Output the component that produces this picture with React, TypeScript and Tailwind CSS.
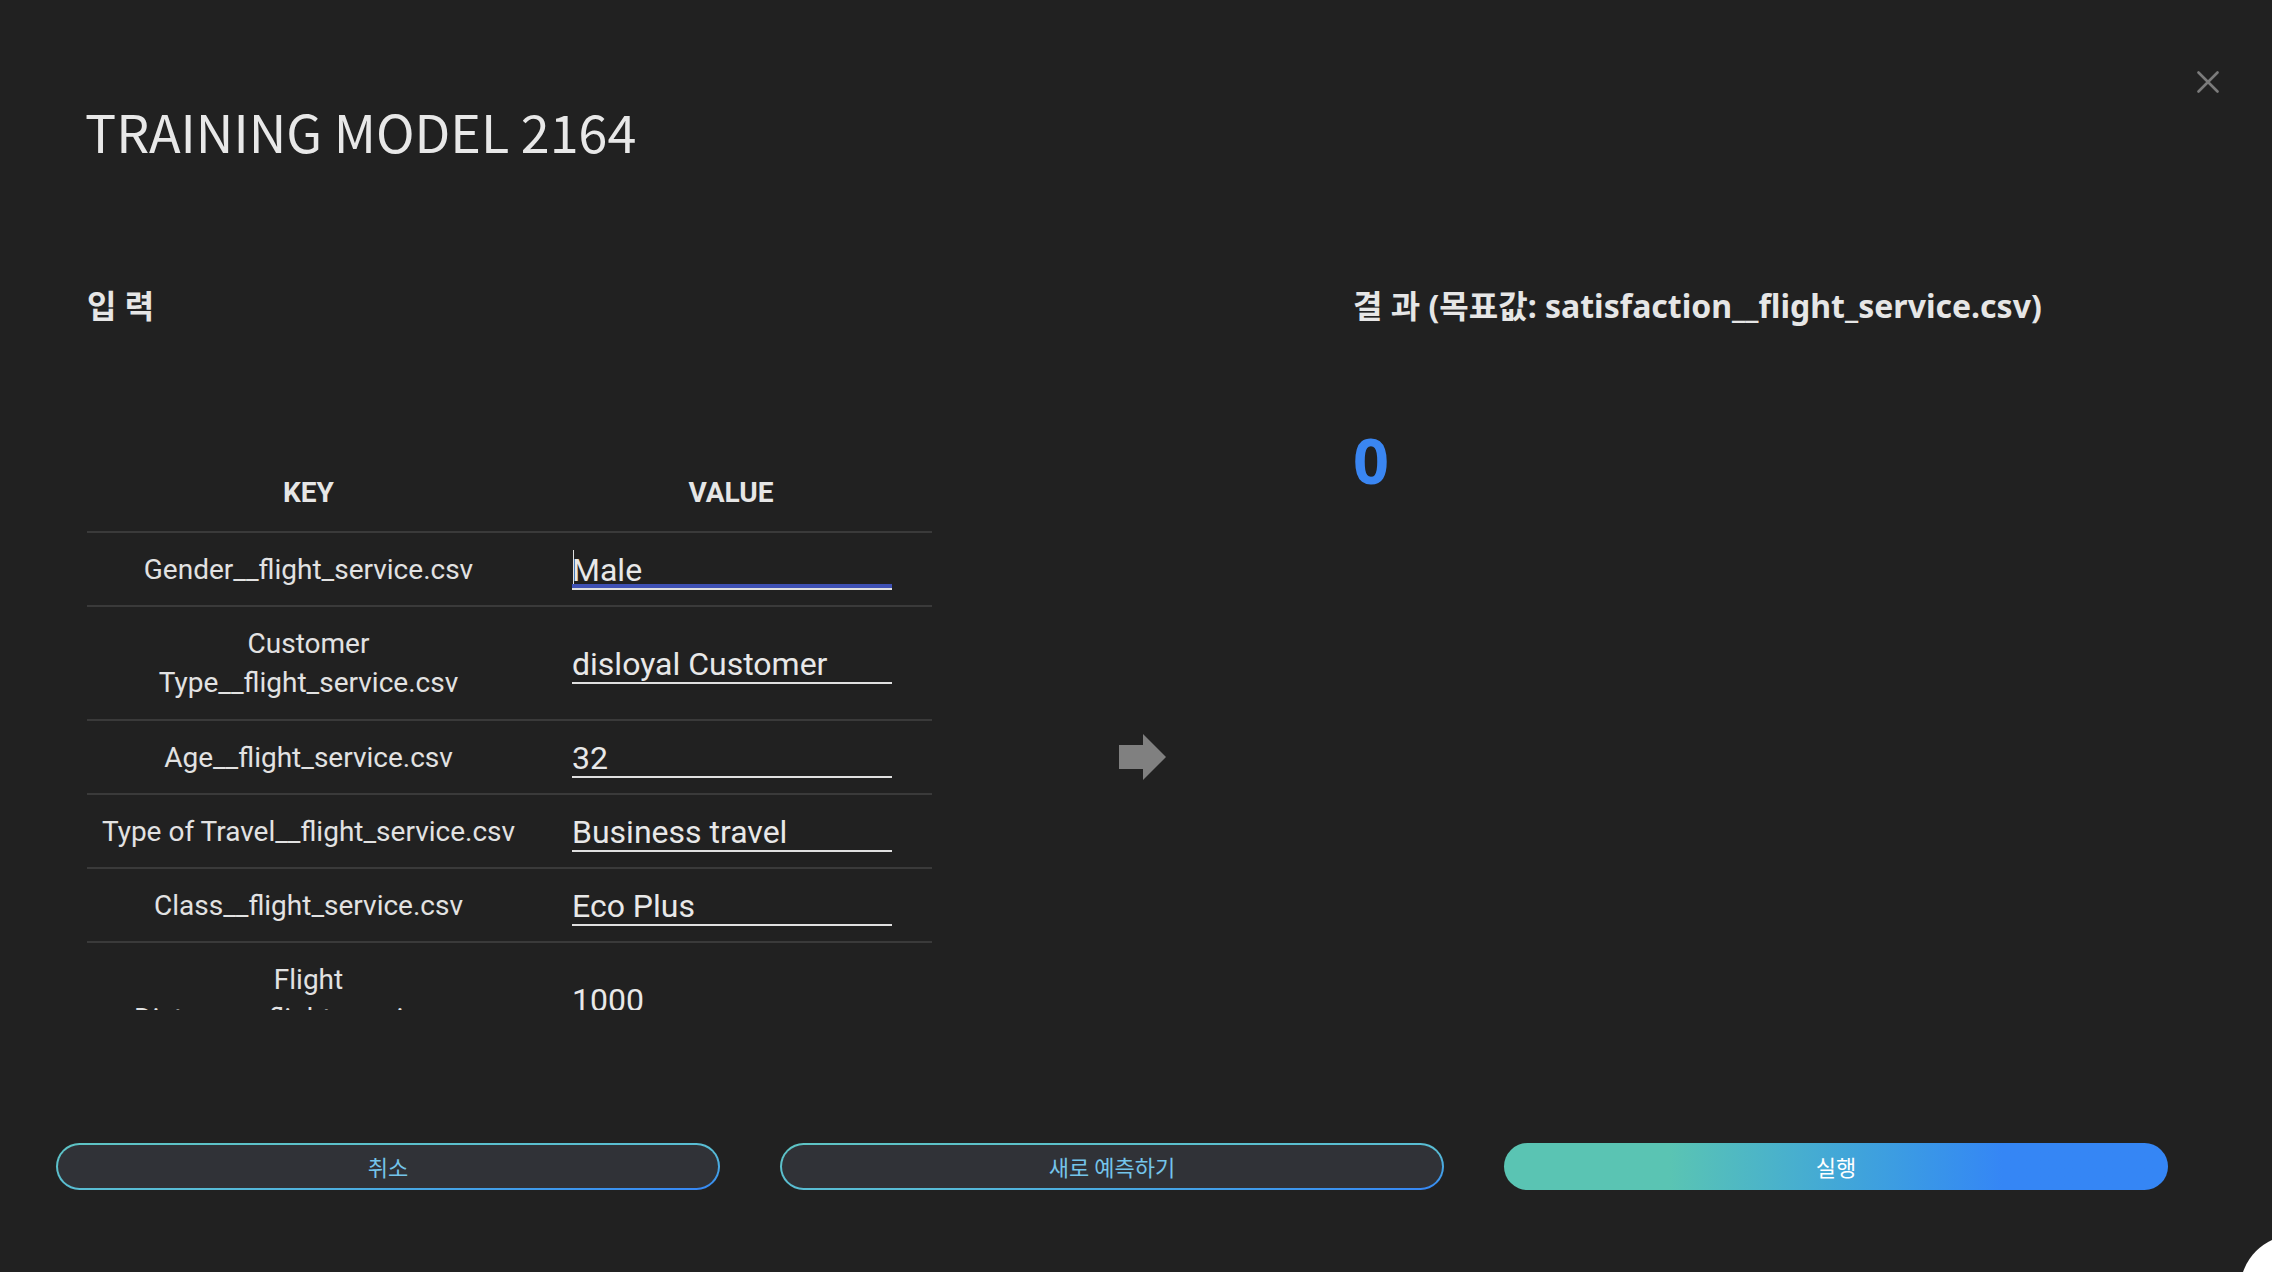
import React from "react";

type Row = { key: string[]; value: string; focused?: boolean };

const rows: Row[] = [
  { key: ["Gender__flight_service.csv"], value: "Male", focused: true },
  { key: ["Customer", "Type__flight_service.csv"], value: "disloyal Customer" },
  { key: ["Age__flight_service.csv"], value: "32" },
  { key: ["Type of Travel__flight_service.csv"], value: "Business travel" },
  { key: ["Class__flight_service.csv"], value: "Eco Plus" },
  { key: ["Flight", "Distance__flight_service.csv"], value: "1000" },
];

const cjk = "font-['Noto_Sans_CJK_KR',sans-serif]";
const noto = "font-['Noto_Sans','Noto_Sans_CJK_KR',sans-serif]";
const roboto = "font-['Roboto','Noto_Sans_CJK_KR',sans-serif]";

function ValueInput({ value, focused }: { value: string; focused?: boolean }) {
  return (
    <div className="relative w-full border-b-2 border-[#e0e0e0] pb-[2px]">
      <div className={`${roboto} h-[37px] text-[32px] leading-[43px] text-[#e8e8e8]`}>{value}</div>
      {focused && (
        <>
          {/* caret */}
          <span className="absolute left-[1px] top-[1px] h-[34px] w-[1px] bg-[#e0e0e0]" />
          {/* focus underline */}
          <span className="absolute bottom-0 left-0 right-0 h-[4px] bg-[#3f51b5]" />
        </>
      )}
    </div>
  );
}

function OutlineButton({ label }: { label: string }) {
  return (
    <div className="h-[47px] w-[664px] rounded-full bg-linear-to-br from-[#5ec4c4] via-[#58bcd6] via-60% to-[#3584f5] p-[2px]">
      <div className={`${cjk} flex h-full w-full items-center justify-center rounded-full bg-[#303237] text-[22px] text-[#74c4ea]`}>
        {label}
      </div>
    </div>
  );
}

export default function App() {
  return (
    <div className="relative h-[1272px] w-[2272px] overflow-hidden bg-[#212121] text-[#e6e6e6]">
      {/* close */}
      <button className="absolute left-[2197px] top-[71px] h-[22px] w-[22px]">
        <svg viewBox="0 0 22 22" className="h-[22px] w-[22px]">
          <path d="M1.5 1.5L20.5 20.5M20.5 1.5L1.5 20.5" stroke="#7b7b7b" strokeWidth="2.6" strokeLinecap="round" />
        </svg>
      </button>

      <div className="flex h-full flex-col">
        <h1 className={`${cjk} pl-[85px] pt-[105px] text-[52px] font-normal leading-[52px] text-[#e8e8e8]`}>
          TRAINING MODEL 2164
        </h1>

        <div className="mt-[129px] flex h-[724px] px-[87px]">
          {/* input panel */}
          <div className="flex w-[845px] flex-col">
            <h2 className={`${noto} h-[40px] text-[32px] font-bold leading-[40px]`}>입 력</h2>
            <div className="mt-[123px] h-[561px] overflow-hidden">
              <div className={`${roboto} flex h-[84px] border-b-2 border-[#3a3a3a] pt-[6px] text-[28px] font-bold`}>
                <div className="flex w-[443px] items-center justify-center">KEY</div>
                <div className="flex flex-1 items-center justify-center">VALUE</div>
              </div>
              {rows.map((r) => (
                <div
                  key={r.key.join(" ")}
                  className={`flex border-b-2 border-[#3a3a3a] ${r.key.length > 1 ? "h-[114px]" : "h-[74px]"}`}
                >
                  <div className={`${roboto} flex w-[443px] flex-col items-center justify-center whitespace-nowrap text-[28px] leading-[39px] text-[#e2e2e2]`}>
                    {r.key.map((k) => (
                      <span key={k}>{k}</span>
                    ))}
                  </div>
                  <div className="flex flex-1 items-center pl-[42px] pr-[40px]">
                    <ValueInput value={r.value} focused={r.focused} />
                  </div>
                </div>
              ))}
            </div>
          </div>

          {/* arrow */}
          <div className="flex w-[421px] justify-center pt-[448px]">
            <svg viewBox="0 0 47 46" className="h-[46px] w-[47px]">
              <polygon points="0,11 24,11 24,0 47,23 24,46 24,35 0,35" fill="#808080" />
            </svg>
          </div>

          {/* result panel */}
          <div className="flex flex-1 flex-col">
            <h2 className={`${noto} h-[40px] whitespace-nowrap text-[32px] font-bold leading-[40px]`}>
              결 과 (목표값: satisfaction__flight_service.csv)
            </h2>
            <div className={`${noto} mt-[102px] text-[63px] font-bold leading-[63px] text-[#3a86f2]`}>0</div>
          </div>
        </div>

        <div className="mt-[133px] flex gap-[60px] px-[56px]">
          <OutlineButton label="취소" />
          <OutlineButton label="새로 예측하기" />
          <div
            className={`${cjk} flex h-[47px] w-[664px] items-center justify-center rounded-full bg-linear-to-r from-[#5ac4b3] from-25% to-[#3586f5] to-75% text-[22px] text-white`}
          >
            실행
          </div>
        </div>
      </div>

      {/* floating corner button */}
      <div className="absolute left-[2240px] top-[1235px] h-[110px] w-[110px] rounded-full bg-white" />
    </div>
  );
}
